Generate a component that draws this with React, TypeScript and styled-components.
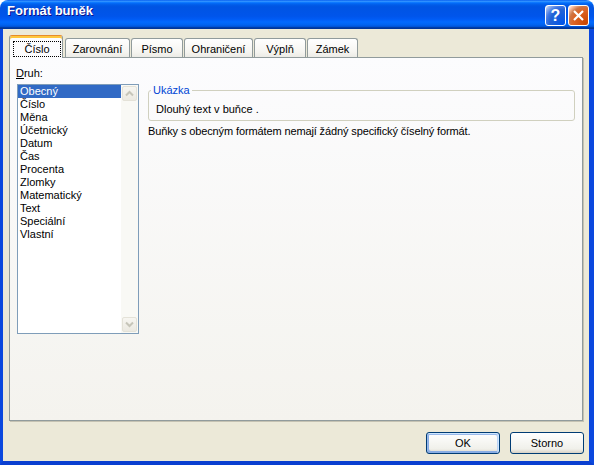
import React from 'react';
import styled, { createGlobalStyle, css } from 'styled-components';

const GlobalStyle = createGlobalStyle`
  *, *::before, *::after { box-sizing: border-box; }
  html, body { margin: 0; padding: 0; background: #ffffff; }
  body {
    font-family: "Liberation Sans", Arial, sans-serif;
    font-size: 11px;
    color: #000000;
  }
`;

const FONT = `"Liberation Sans", Arial, sans-serif`;

const Window = styled.div`
  width: 594px;
  height: 465px;
  display: flex;
  flex-direction: column;
  border-radius: 8px 8px 0 0;
  overflow: hidden;
`;

const TitleBar = styled.div`
  height: 29px;
  flex: none;
  display: flex;
  align-items: flex-start;
  padding: 0 5px 0 7px;
  background: linear-gradient(
    180deg,
    #0058ee 0%,
    #3593ff 4%,
    #288eff 6%,
    #127dff 8%,
    #036ffc 10%,
    #0262ee 14%,
    #0057e5 20%,
    #0054e3 24%,
    #0055eb 56%,
    #005bf5 66%,
    #026afe 76%,
    #0062ef 86%,
    #0052d6 92%,
    #0040ab 94%,
    #003092 100%
  );
`;

const Title = styled.div`
  flex: 1;
  margin-top: 3px;
  line-height: 26px;
  font: bold 13px ${FONT};
  color: #ffffff;
  text-shadow: 1px 1px #0f1089;
`;

const captionButton = css`
  width: 21px;
  height: 21px;
  margin-top: 5px;
  border: 1px solid #ffffff;
  border-radius: 3px;
  display: flex;
  align-items: center;
  justify-content: center;
  color: #ffffff;
`;

const HelpButton = styled.div`
  ${captionButton};
  margin-right: 2px;
  background: radial-gradient(
    circle at 90% 90%,
    #0054e9 0%,
    #2263d5 55%,
    #4479e4 70%,
    #a3bbec 90%,
    #ffffff 100%
  );
  font: bold 16px ${FONT};
  line-height: 19px;
`;

const CloseButton = styled.div`
  ${captionButton};
  background: radial-gradient(
    circle at 90% 90%,
    #cc4600 0%,
    #dc6527 55%,
    #cd7546 70%,
    #ffccb2 90%,
    #ffffff 100%
  );
`;

const Body = styled.div`
  flex: 1;
  display: flex;
  flex-direction: column;
  background: #ece9d8;
  border-left: 3px solid #0b48de;
  border-right: 5px solid #0b48de;
  border-bottom: 4px solid #0a3fd0;
  padding: 6px 6px 7px 6px;
`;

const TabRow = styled.div`
  height: 22px;
  flex: none;
  display: flex;
  align-items: flex-end;
  gap: 1px;
`;

const Tab = styled.div<{ $w: number; $active?: boolean }>`
  width: ${(p) => p.$w}px;
  border: 1px solid #919b9c;
  border-bottom: none;
  border-radius: 3px 3px 0 0;
  font: 11px ${FONT};
  line-height: 13px;
  text-align: center;
  ${(p) =>
    p.$active
      ? css`
          position: relative;
          z-index: 2;
          height: 23px;
          margin-bottom: -1px;
          margin-right: 1px;
          display: flex;
          justify-content: center;
          align-items: flex-start;
          padding: 4px 1px 0 3px;
          background: #fcfcfe;
          border-top-color: #e68b2c;
          box-shadow: inset 0 2px #ffc73c;
        `
      : css`
          height: 19px;
          padding-top: 4px;
          background: linear-gradient(180deg, #ffffff 0%, #f6f5f1 70%, #ecebe6 100%);
        `}
`;

const FocusRect = styled.span`
  display: block;
  width: 48px;
  border: 1px dotted #000000;
  line-height: 14px;
  margin-top: 1px;
`;

const Panel = styled.div`
  flex: 1;
  display: flex;
  align-items: flex-start;
  border: 1px solid #919b9c;
  background: linear-gradient(180deg, #fcfcfe 0%, #f4f3ee 100%);
  box-shadow: 1px 1px 0 #c5c2b2;
  padding: 9px 7px 0 7px;
`;

const LeftColumn = styled.div`
  width: 122px;
  flex: none;
  display: flex;
  flex-direction: column;
`;

const Label = styled.div`
  line-height: 13px;
  margin-left: -1px;
  margin-bottom: 4px;
`;

const ListBox = styled.div`
  width: 122px;
  height: 250px;
  border: 1px solid #7f9db9;
  background: #ffffff;
  display: flex;
`;

const Items = styled.div`
  flex: 1;
  display: flex;
  flex-direction: column;
`;

const Item = styled.div<{ $selected?: boolean }>`
  line-height: 13px;
  padding-left: 2px;
  white-space: nowrap;
  background: ${(p) => (p.$selected ? '#316ac5' : 'transparent')};
  color: ${(p) => (p.$selected ? '#ffffff' : '#000000')};
`;

const ScrollBar = styled.div`
  width: 17px;
  flex: none;
  display: flex;
  flex-direction: column;
  justify-content: space-between;
  padding: 1px;
  background: #f9f9f5;
`;

const ScrollButton = styled.div`
  width: 15px;
  height: 15px;
  border: 1px solid #e4e2d8;
  border-radius: 2px;
  background: linear-gradient(180deg, #f7f6f1 0%, #ebe9e1 100%);
  display: flex;
  align-items: center;
  justify-content: center;
`;

const RightColumn = styled.div`
  flex: 1;
  margin-left: 9px;
  display: flex;
  flex-direction: column;
`;

const Group = styled.fieldset`
  margin: 17px 0 0 0;
  min-width: 0;
  padding: 6px 7px 4px 7px;
  border: 1px solid #d0d0bf;
  border-radius: 3px;
`;

const Legend = styled.legend`
  padding: 0 2px;
  margin-left: -5px;
  line-height: 13px;
  color: #0046d5;
`;

const SampleText = styled.div`
  line-height: 13px;
`;

const Description = styled.div`
  margin-top: 4px;
  line-height: 13px;
  white-space: nowrap;
  letter-spacing: -0.12px;
`;

const Footer = styled.div`
  flex: none;
  display: flex;
  justify-content: flex-end;
  gap: 10px;
  margin-top: 11px;
  margin-right: -1px;
`;

const Button = styled.button<{ $default?: boolean }>`
  width: 74px;
  height: 22px;
  padding: 0;
  border: 1px solid #003c74;
  border-radius: 3px;
  background: linear-gradient(180deg, #ffffff 0%, #f0f0ea 80%, #d6d0c5 100%);
  font: 11px ${FONT};
  color: #000000;
  ${(p) =>
    p.$default &&
    css`
      box-shadow: inset -1px 1px #cee7ff, inset 1px 2px #98b8ea, inset -2px 2px #bcd4f6,
        inset 1px -1px #89ade4, inset 2px -2px #89ade4;
    `}
`;

const Chevron = ({ down }: { down?: boolean }) => (
  <svg width="9" height="7" viewBox="0 0 9 7">
    <path
      d={down ? 'M1 1.5 L4.5 5 L8 1.5' : 'M1 5.5 L4.5 2 L8 5.5'}
      fill="none"
      stroke="#c6c5b9"
      strokeWidth="2"
    />
  </svg>
);

const tabs = [
  { label: 'Číslo', w: 54 },
  { label: 'Zarovnání', w: 65 },
  { label: 'Písmo', w: 52 },
  { label: 'Ohraničení', w: 69 },
  { label: 'Výplň', w: 52 },
  { label: 'Zámek', w: 51 },
];

const kinds = [
  'Obecný',
  'Číslo',
  'Měna',
  'Účetnický',
  'Datum',
  'Čas',
  'Procenta',
  'Zlomky',
  'Matematický',
  'Text',
  'Speciální',
  'Vlastní',
];

export default function App() {
  return (
    <>
      <GlobalStyle />
      <Window>
        <TitleBar>
          <Title>Formát buněk</Title>
          <HelpButton>?</HelpButton>
          <CloseButton>
            <svg width="13" height="13" viewBox="0 0 13 13">
              <path d="M2 2 L11 11 M11 2 L2 11" stroke="#ffffff" strokeWidth="2.2" />
            </svg>
          </CloseButton>
        </TitleBar>
        <Body>
          <TabRow>
            {tabs.map((t, i) =>
              i === 0 ? (
                <Tab key={t.label} $w={t.w} $active>
                  <FocusRect>{t.label}</FocusRect>
                </Tab>
              ) : (
                <Tab key={t.label} $w={t.w}>
                  {t.label}
                </Tab>
              )
            )}
          </TabRow>
          <Panel>
            <LeftColumn>
              <Label>
                <u>D</u>ruh:
              </Label>
              <ListBox>
                <Items>
                  {kinds.map((k, i) => (
                    <Item key={k} $selected={i === 0}>
                      {k}
                    </Item>
                  ))}
                </Items>
                <ScrollBar>
                  <ScrollButton>
                    <Chevron />
                  </ScrollButton>
                  <ScrollButton>
                    <Chevron down />
                  </ScrollButton>
                </ScrollBar>
              </ListBox>
            </LeftColumn>
            <RightColumn>
              <Group>
                <Legend>Ukázka</Legend>
                <SampleText>Dlouhý text v buňce .</SampleText>
              </Group>
              <Description>
                Buňky s obecným formátem nemají žádný specifický číselný formát.
              </Description>
            </RightColumn>
          </Panel>
          <Footer>
            <Button $default>OK</Button>
            <Button>Storno</Button>
          </Footer>
        </Body>
      </Window>
    </>
  );
}
